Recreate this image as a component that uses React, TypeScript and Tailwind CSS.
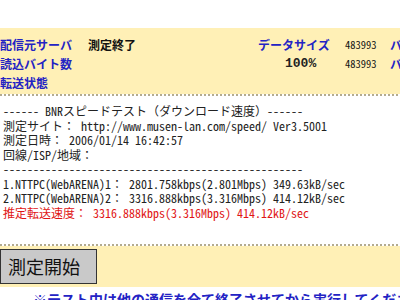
export default function App() {
  const mono = "font-['Noto_Sans_Mono_CJK_JP','Liberation_Mono','Noto_Sans_CJK_JP',monospace]"
  const label = "shrink-0 whitespace-nowrap font-['Noto_Sans_CJK_JP',sans-serif] font-bold text-[12px] text-[#2323c4]"
  const dots = "h-[2px] bg-[repeating-linear-gradient(90deg,#b3ab90_0_2px,transparent_2px_4px)]"
  return (
    <div className="h-[300px] w-[400px] overflow-hidden bg-white">
      <div className="h-[28px]" />
      <div className="flex h-[66px] flex-col bg-[#fff0b6] pt-[7px]">
        <div className="flex h-[19px] items-center whitespace-nowrap">
          <div className={`w-[88px] ${label}`}>配信元サーバ</div>
          <div className="w-[170px] shrink-0 font-['Noto_Sans_CJK_JP',sans-serif] text-[12px] font-bold text-[#111]">測定終了</div>
          <div className={`w-[87px] ${label}`}>データサイズ</div>
          <div className={`w-[45px] shrink-0 text-[10.5px] text-[#111] ${mono}`}>483993</div>
          <div className={label}>バイト</div>
        </div>
        <div className="flex h-[19px] items-center whitespace-nowrap">
          <div className={`w-[258px] ${label}`}>読込バイト数</div>
          <div className="w-[87px] shrink-0 pl-[27px] font-['Liberation_Mono',monospace] text-[13px] font-bold text-[#222]">100%</div>
          <div className={`w-[45px] shrink-0 text-[10.5px] text-[#111] ${mono}`}>483993</div>
          <div className={label}>バイト</div>
        </div>
        <div className="flex h-[19px] items-center">
          <div className={label}>転送状態</div>
        </div>
      </div>
      <div className={dots} />
      <div className={`flex h-[148px] flex-col whitespace-pre pl-[3px] pt-[8px] text-[12px] leading-[14.5px] text-[#222] ${mono}`}>
        <div>------ BNRスピードテスト（ダウンロード速度）------</div>
        <div>測定サイト： http://www.musen-lan.com/speed/ Ver3.5001</div>
        <div>測定日時： 2006/01/14 16:42:57</div>
        <div>回線/ISP/地域：</div>
        <div>--------------------------------------------------</div>
        <div>1.NTTPC(WebARENA)1： 2801.758kbps(2.801Mbps) 349.63kB/sec</div>
        <div>2.NTTPC(WebARENA)2： 3316.888kbps(3.316Mbps) 414.12kB/sec</div>
        <div className="text-[#e01515]">推定転送速度： 3316.888kbps(3.316Mbps) 414.12kB/sec</div>
      </div>
      <div className={dots} />
      <div className="flex h-[41px] items-center bg-[#fff0b6]">
        <button className="flex h-[35px] w-[97px] items-center border border-[#333] bg-[#c9c9c9] pl-[7px] font-['Noto_Sans_CJK_JP',sans-serif] text-[18px] text-[#111]">
          測定開始
        </button>
      </div>
      <div className="whitespace-nowrap pl-[33px] pt-[3px] font-['Noto_Sans_CJK_JP',sans-serif] text-[14px] font-bold leading-[18px] text-[#2323c4]">
        ※テスト中は他の通信を全て終了させてから実行してください
      </div>
    </div>
  )
}
